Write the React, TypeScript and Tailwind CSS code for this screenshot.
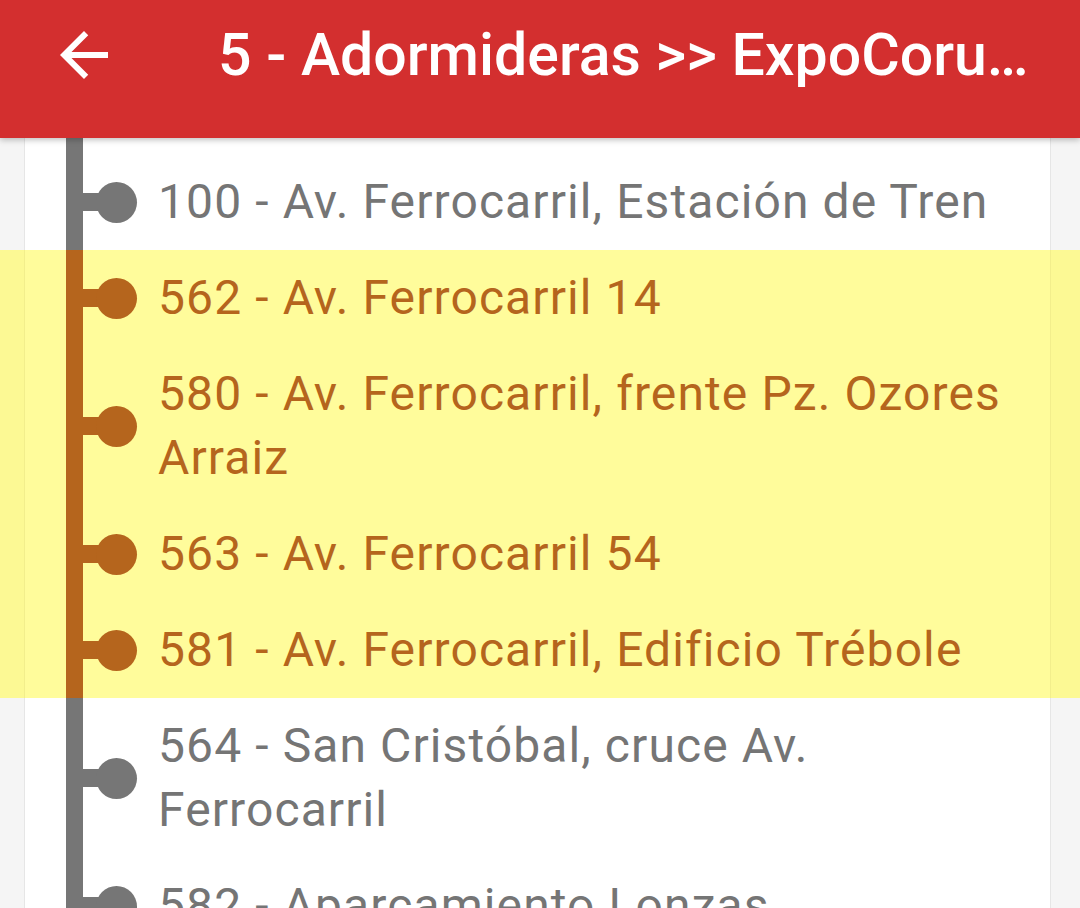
import React from "react";

interface Stop {
  code: string;
  name: string;
  current?: boolean;
}

const STOPS: Stop[] = [
  { code: "100", name: "Av. Ferrocarril, Estación de Tren" },
  { code: "562", name: "Av. Ferrocarril 14", current: true },
  { code: "580", name: "Av. Ferrocarril, frente Pz. Ozores Arraiz", current: true },
  { code: "563", name: "Av. Ferrocarril 54", current: true },
  { code: "581", name: "Av. Ferrocarril, Edificio Trébole", current: true },
  { code: "564", name: "San Cristóbal, cruce Av. Ferrocarril" },
  { code: "582", name: "Aparcamiento Lonzas" },
];

function BackArrow() {
  return (
    <svg viewBox="0 0 24 24" className="w-[72px] h-[72px]" fill="white">
      <path d="M20 11H7.83l5.59-5.59L12 4l-8 8 8 8 1.41-1.41L7.83 13H20v-2z" />
    </svg>
  );
}

function StopRow({ stop }: { stop: Stop }) {
  const on = !!stop.current;
  return (
    <div className={on ? "flex bg-[#fcf994]" : "flex bg-[#f5f5f5]"}>
      <div className="w-[24px] shrink-0" />
      <div
        className={
          on
            ? "flex w-[1027px] shrink-0 bg-[#fffc9b] border-l border-r border-[#f2ee8c]"
            : "flex w-[1027px] shrink-0 bg-white border-l border-r border-[#e6e6e6]"
        }
      >
        <div className="w-[41px] shrink-0" />
        <div className={on ? "w-[17px] shrink-0 bg-[#b5651d]" : "w-[17px] shrink-0 bg-[#767676]"} />
        <div className="flex items-center self-center shrink-0">
          <div className={on ? "w-[17px] h-[18px] bg-[#b5651d]" : "w-[17px] h-[18px] bg-[#767676]"} />
          <div
            className={
              on
                ? "w-[41px] h-[41px] -ml-[4px] rounded-full bg-[#b5651d]"
                : "w-[41px] h-[41px] -ml-[4px] rounded-full bg-[#767676]"
            }
          />
        </div>
        <div
          className={
            on
              ? "flex-1 min-w-0 pl-[21px] pr-[30px] py-[16px] text-[48px] tracking-[1.1px] leading-[64px] text-[#b5651d]"
              : "flex-1 min-w-0 pl-[21px] pr-[30px] py-[16px] text-[48px] tracking-[1.1px] leading-[64px] text-[#757575]"
          }
        >
          {stop.code} - {stop.name}
        </div>
      </div>
      <div className="flex-1" />
    </div>
  );
}

export default function App() {
  return (
    <div
      className="w-[1080px] h-[908px] overflow-hidden bg-[#f5f5f5] flex flex-col"
      style={{ fontFamily: "Roboto, 'Noto Sans', sans-serif" }}
    >
      <header className="relative z-10 h-[138px] shrink-0 bg-[#d32f2f] shadow-[0_2px_6px_rgba(0,0,0,0.25)]">
        <div className="flex items-center h-[110px]">
          <div className="w-[48px] shrink-0" />
          <BackArrow />
          <div className="flex-1 min-w-0 pl-[98px] pr-[40px] text-white text-[59px] font-medium truncate leading-[110px]">
            5 - Adormideras &gt;&gt; ExpoCoruña
          </div>
        </div>
      </header>
      <main className="flex flex-col">
        <div className="flex h-[16px]">
          <div className="w-[24px] shrink-0" />
          <div className="flex w-[1027px] shrink-0 bg-white border-l border-r border-[#e6e6e6]">
            <div className="w-[41px] shrink-0" />
            <div className="w-[17px] bg-[#767676]" />
          </div>
        </div>
        {STOPS.map((s) => (
          <StopRow key={s.code} stop={s} />
        ))}
      </main>
    </div>
  );
}
